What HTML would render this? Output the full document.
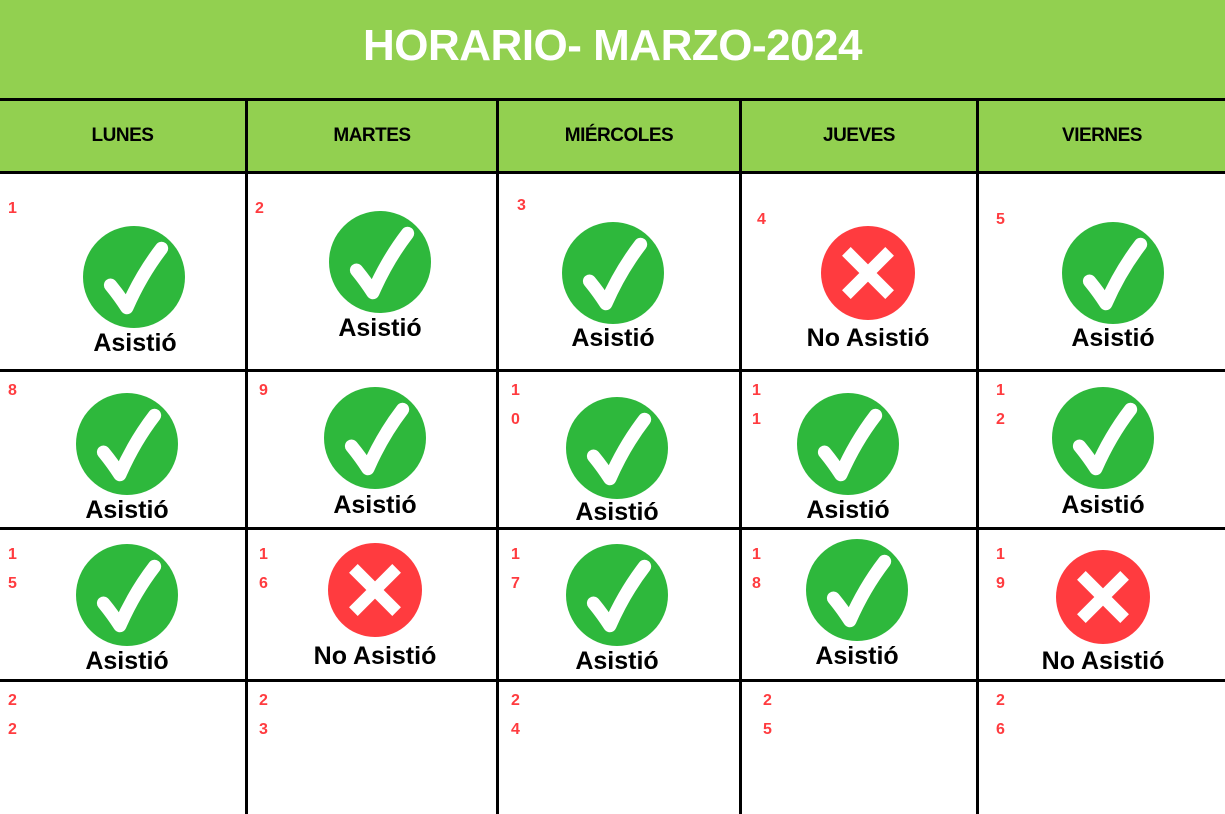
<!DOCTYPE html>
<html><head><meta charset="utf-8"><style>
*{margin:0;padding:0;box-sizing:border-box}
body{width:1225px;height:814px;overflow:hidden;background:#fff;position:relative;font-family:"Liberation Sans",sans-serif}
.a{position:absolute}
.g{background:#92d050}
.k{background:#000}
.t{color:#fff;font-weight:bold;font-size:44px;letter-spacing:-0.5px;text-align:center;width:1225px;left:0;top:21px;line-height:50px}
.h{font-weight:bold;font-size:19px;letter-spacing:-0.5px;text-align:center;line-height:24px;top:124px}
.n{color:#ff3b3f;font-weight:bold;font-size:16px;line-height:18px}
.l{width:300px;text-align:center;font-weight:bold;font-size:25px;line-height:28px;letter-spacing:0px}
</style></head><body>
<div class="a g" style="left:0;top:0;width:1225px;height:172px"></div>
<div class="a t">HORARIO- MARZO-2024</div>
<div class="a k" style="left:0;top:98px;width:1225px;height:3px"></div>
<div class="a k" style="left:0;top:171px;width:1225px;height:3px"></div>
<div class="a k" style="left:0;top:369px;width:1225px;height:3px"></div>
<div class="a k" style="left:0;top:527px;width:1225px;height:3px"></div>
<div class="a k" style="left:0;top:679px;width:1225px;height:3px"></div>
<div class="a k" style="left:245px;top:98px;width:3px;height:716px"></div>
<div class="a k" style="left:496px;top:98px;width:3px;height:716px"></div>
<div class="a k" style="left:739px;top:98px;width:3px;height:716px"></div>
<div class="a k" style="left:976px;top:98px;width:3px;height:716px"></div>
<div class="a h" style="left:0;width:245px">LUNES</div>
<div class="a h" style="left:248px;width:248px">MARTES</div>
<div class="a h" style="left:499px;width:240px">MIÉRCOLES</div>
<div class="a h" style="left:742px;width:234px">JUEVES</div>
<div class="a h" style="left:979px;width:246px">VIERNES</div>

<svg width="0" height="0" style="position:absolute"><defs>
<g id="ck"><circle cx="50" cy="50" r="50" fill="#2eb83c"/><path d="M27 58 Q36 69 43 80 Q57 48 77 22" fill="none" stroke="#fff" stroke-width="13" stroke-linecap="round" stroke-linejoin="round"/></g>
<g id="xx"><circle cx="50" cy="50" r="50" fill="#ff3b3f"/><path d="M27 27L73 73M73 27L27 73" stroke="#fff" stroke-width="13"/></g>
</defs></svg>

<svg class="a" style="left:83px;top:226px" width="102" height="102" viewBox="0 0 100 100"><use href="#ck"/></svg>
<div class="a l" style="left:-15px;top:329px">Asistió</div>
<svg class="a" style="left:329px;top:211px" width="102" height="102" viewBox="0 0 100 100"><use href="#ck"/></svg>
<div class="a l" style="left:230px;top:314px">Asistió</div>
<svg class="a" style="left:562px;top:222px" width="102" height="102" viewBox="0 0 100 100"><use href="#ck"/></svg>
<div class="a l" style="left:463px;top:324px">Asistió</div>
<svg class="a" style="left:821px;top:226px" width="94" height="94" viewBox="0 0 100 100"><use href="#xx"/></svg>
<div class="a l" style="left:718px;top:324px">No Asistió</div>
<svg class="a" style="left:1062px;top:222px" width="102" height="102" viewBox="0 0 100 100"><use href="#ck"/></svg>
<div class="a l" style="left:963px;top:324px">Asistió</div>
<svg class="a" style="left:76px;top:393px" width="102" height="102" viewBox="0 0 100 100"><use href="#ck"/></svg>
<div class="a l" style="left:-23px;top:496px">Asistió</div>
<svg class="a" style="left:324px;top:387px" width="102" height="102" viewBox="0 0 100 100"><use href="#ck"/></svg>
<div class="a l" style="left:225px;top:491px">Asistió</div>
<svg class="a" style="left:566px;top:397px" width="102" height="102" viewBox="0 0 100 100"><use href="#ck"/></svg>
<div class="a l" style="left:467px;top:498px">Asistió</div>
<svg class="a" style="left:797px;top:393px" width="102" height="102" viewBox="0 0 100 100"><use href="#ck"/></svg>
<div class="a l" style="left:698px;top:496px">Asistió</div>
<svg class="a" style="left:1052px;top:387px" width="102" height="102" viewBox="0 0 100 100"><use href="#ck"/></svg>
<div class="a l" style="left:953px;top:491px">Asistió</div>
<svg class="a" style="left:76px;top:544px" width="102" height="102" viewBox="0 0 100 100"><use href="#ck"/></svg>
<div class="a l" style="left:-23px;top:647px">Asistió</div>
<svg class="a" style="left:328px;top:543px" width="94" height="94" viewBox="0 0 100 100"><use href="#xx"/></svg>
<div class="a l" style="left:225px;top:642px">No Asistió</div>
<svg class="a" style="left:566px;top:544px" width="102" height="102" viewBox="0 0 100 100"><use href="#ck"/></svg>
<div class="a l" style="left:467px;top:647px">Asistió</div>
<svg class="a" style="left:806px;top:539px" width="102" height="102" viewBox="0 0 100 100"><use href="#ck"/></svg>
<div class="a l" style="left:707px;top:642px">Asistió</div>
<svg class="a" style="left:1056px;top:550px" width="94" height="94" viewBox="0 0 100 100"><use href="#xx"/></svg>
<div class="a l" style="left:953px;top:647px">No Asistió</div>

<div class="a n" style="left:8px;top:200px">1</div>
<div class="a n" style="left:255px;top:200px">2</div>
<div class="a n" style="left:517px;top:197px">3</div>
<div class="a n" style="left:757px;top:211px">4</div>
<div class="a n" style="left:996px;top:211px">5</div>
<div class="a n" style="left:8px;top:382px">8</div>
<div class="a n" style="left:259px;top:382px">9</div>
<div class="a n" style="left:511px;top:382px">1</div>
<div class="a n" style="left:511px;top:411px">0</div>
<div class="a n" style="left:752px;top:382px">1</div>
<div class="a n" style="left:752px;top:411px">1</div>
<div class="a n" style="left:996px;top:382px">1</div>
<div class="a n" style="left:996px;top:411px">2</div>
<div class="a n" style="left:8px;top:546px">1</div>
<div class="a n" style="left:8px;top:575px">5</div>
<div class="a n" style="left:259px;top:546px">1</div>
<div class="a n" style="left:259px;top:575px">6</div>
<div class="a n" style="left:511px;top:546px">1</div>
<div class="a n" style="left:511px;top:575px">7</div>
<div class="a n" style="left:752px;top:546px">1</div>
<div class="a n" style="left:752px;top:575px">8</div>
<div class="a n" style="left:996px;top:546px">1</div>
<div class="a n" style="left:996px;top:575px">9</div>
<div class="a n" style="left:8px;top:692px">2</div>
<div class="a n" style="left:8px;top:721px">2</div>
<div class="a n" style="left:259px;top:692px">2</div>
<div class="a n" style="left:259px;top:721px">3</div>
<div class="a n" style="left:511px;top:692px">2</div>
<div class="a n" style="left:511px;top:721px">4</div>
<div class="a n" style="left:763px;top:692px">2</div>
<div class="a n" style="left:763px;top:721px">5</div>
<div class="a n" style="left:996px;top:692px">2</div>
<div class="a n" style="left:996px;top:721px">6</div>
</body></html>
